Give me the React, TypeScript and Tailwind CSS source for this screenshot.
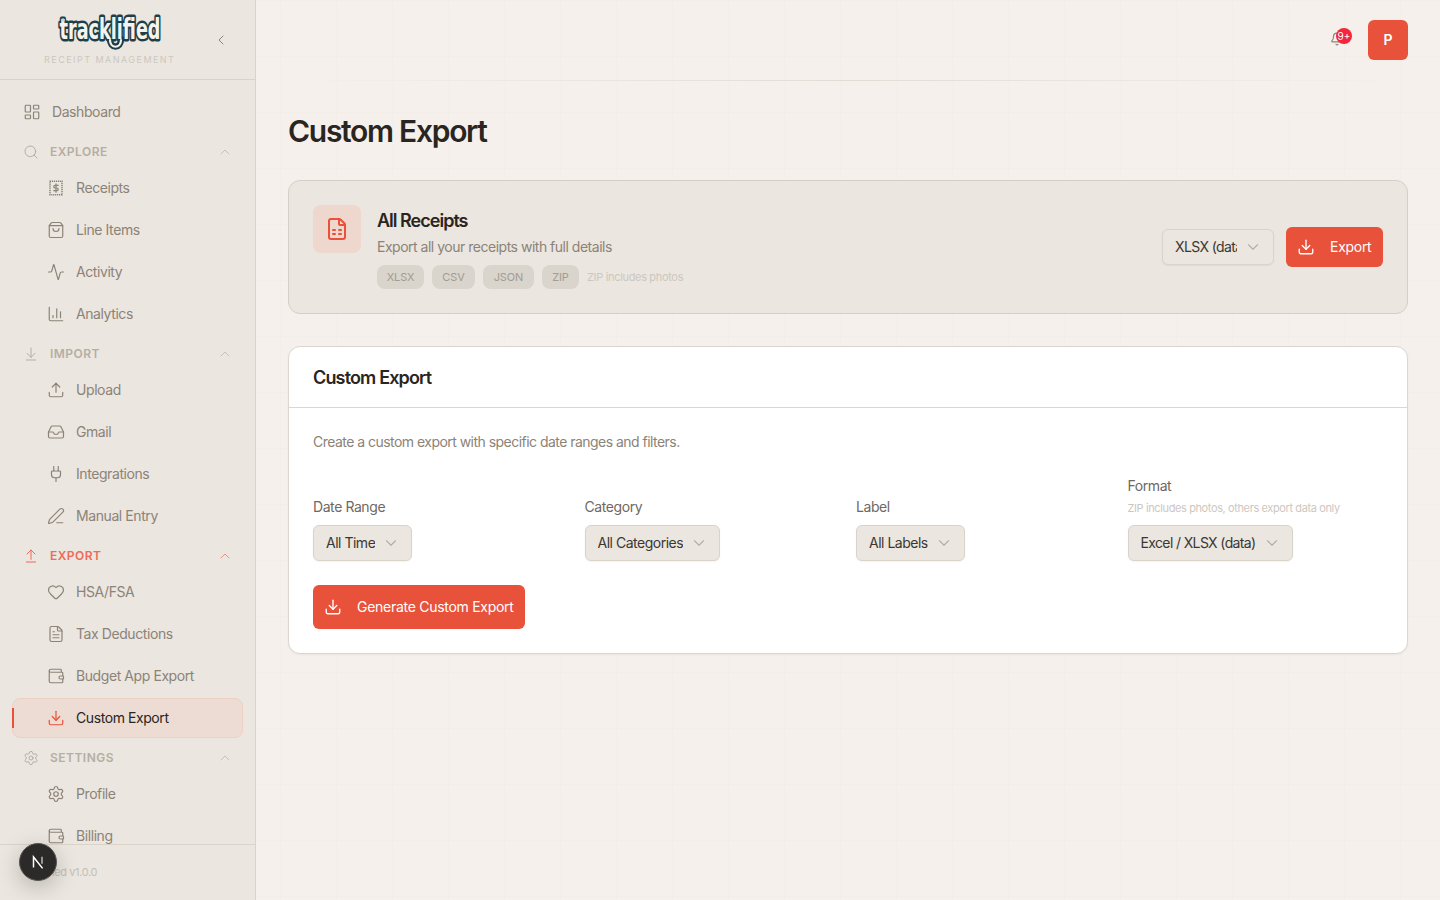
import React from "react";
import { LayoutDashboard, Search, ChevronUp, ChevronDown, ChevronLeft, ShoppingBag, Activity, ChartColumn, ArrowDownToLine, ArrowUpFromLine, Upload, Inbox, Plug, PenLine, Heart, FileText, Wallet, Download, Settings, FileSpreadsheet, Bell } from "lucide-react";

type IconProps = { className?: string; strokeWidth?: number };

function ReceiptIcon({ className }: IconProps) {
  return (
    <svg viewBox="0 0 24 24" fill="none" stroke="currentColor" className={className}>
      <rect x="4" y="3" width="16" height="18" strokeWidth={2} strokeDasharray="1.6 1" />
      <path d="M15 8.5h-4.2a1.7 1.7 0 0 0 0 3.5h2.4a1.7 1.7 0 0 1 0 3.5H9" strokeWidth={1.6} strokeLinecap="round" />
      <path d="M12 6.5v11" strokeWidth={1.6} strokeLinecap="round" />
    </svg>
  );
}

type Item = { label: string; icon: React.ComponentType<IconProps>; active?: boolean };

function Sub({ item }: { item: Item }) {
  const Icon = item.icon;
  return (
    <div className={item.active ? "relative flex h-10 items-center gap-[11px] rounded-lg border border-[#f0cfc3] bg-[#ecdcd3] pl-[34px] text-[#2a2520]" : "flex h-10 items-center gap-[11px] rounded-lg pl-[35px] text-[#8c8378]"}>
      {item.active && <span className="absolute -left-px top-[9px] h-5 w-0.5 bg-[#e9513a]" />}
      <Icon strokeWidth={1.6} className={item.active ? "size-[18px] shrink-0 text-[#e9513a]" : "size-[18px] shrink-0"} />
      <span className="text-sm tracking-[-0.03em]">{item.label}</span>
    </div>
  );
}

function Section({ label, icon: Icon, items, accent }: { label: string; icon: Item["icon"]; items: Item[]; accent?: boolean }) {
  return (
    <div className="flex flex-col gap-0.5">
      <div className={accent ? "-mb-0.5 flex h-8 items-center pl-[11px] pr-2.5 text-[#ee6b58]" : "-mb-0.5 flex h-8 items-center pl-[11px] pr-2.5 text-[#b5aea4]"}>
        <Icon strokeWidth={1.5} className="size-4 shrink-0" />
        <span className="ml-[11px] flex-1 text-xs font-semibold tracking-[0.04em]">{label}</span>
        <ChevronUp strokeWidth={1.5} className={accent ? "size-4 text-[#f0917f]" : "size-4 text-[#c7c1b8]"} />
      </div>
      {items.map((i) => (
        <Sub key={i.label} item={i} />
      ))}
    </div>
  );
}

function Select({ label, className, tight }: { label: string; className?: string; tight?: boolean }) {
  return (
    <div className={"flex h-9 items-center justify-between rounded-md border border-[#d9d3ca] bg-[#ebe6df] pl-3 pr-[11px] text-sm text-[#3c3732] shadow-[0_1px_2px_rgba(0,0,0,0.05)] " + (className ?? "")}>
      <span className={tight ? "overflow-hidden whitespace-nowrap tracking-[-0.045em]" : "overflow-hidden whitespace-nowrap tracking-[-0.035em]"}>{label}</span>
      <ChevronDown strokeWidth={1.5} className="ml-[7px] size-[18px] shrink-0 text-[#b5aea4]" />
    </div>
  );
}

function Field({ label, hint, select, tight }: { label: string; hint?: string; select: string; tight?: boolean }) {
  return (
    <div className="flex flex-col items-start">
      <div className="text-sm leading-5 tracking-[-0.03em] text-[#6f6860]">{label}</div>
      {hint && <div className="mb-[9px] mt-1 text-[11px] leading-4 tracking-[-0.035em] text-[#cdc7bf]">{hint}</div>}
      <Select label={select} tight={tight} className={hint ? "" : "mt-2"} />
    </div>
  );
}

const chips = [
  { label: "XLSX", w: "w-[47px]" },
  { label: "CSV", w: "w-[43px]" },
  { label: "JSON", w: "w-[51px]" },
  { label: "ZIP", w: "w-[37px]" },
];

export default function App() {
  return (
    <div className="flex h-[900px] w-[1440px] overflow-hidden bg-[#f5f0eb] bg-[linear-gradient(to_right,rgba(120,100,80,0.012)_1px,transparent_1px),linear-gradient(to_bottom,rgba(120,100,80,0.012)_1px,transparent_1px)] bg-[size:56px_56px] font-['Inter',sans-serif]">
      <aside className="relative flex w-64 shrink-0 flex-col border-r border-[#d9d3ca] bg-[#ebe6df]">
        <div className="flex h-20 shrink-0 items-center border-b border-[#d9d3ca] pl-11 pr-[26px]">
          <div className="flex flex-1 flex-col items-start">
            <svg width="130" height="46" viewBox="0 0 130 46" className="-mb-[3px] -ml-[3px] -mt-[3px]" aria-label="tracklified">
              <path d="M69 28c0 10 11 10 11 0" fill="none" stroke="#1e3f48" strokeWidth="6.5" strokeLinecap="round" />
              <text x="18.5" y="28" fontFamily="'DejaVu Sans', sans-serif" fontWeight="700" fontSize="29" textLength="101" lengthAdjust="spacingAndGlyphs" fill="#f5f3ee" stroke="#1e3f48" strokeWidth="5" strokeLinejoin="round" paintOrder="stroke">tracklified</text>
              <path d="M69 29c0 9 11 9 11 0" fill="none" stroke="#f5f3ee" strokeWidth="2.2" strokeLinecap="round" />
              <circle cx="22" cy="9" r="1.7" fill="#a9dfe6" />
            </svg>
            <div className="text-[9px] leading-3 tracking-[0.163em] text-[#cdc7bf]">RECEIPT MANAGEMENT</div>
          </div>
          <ChevronLeft strokeWidth={1.5} className="size-4 text-[#8c8378]" />
        </div>
        <nav className="flex min-h-0 flex-1 flex-col gap-1 overflow-hidden px-3 pt-3">
          <div className="flex h-10 shrink-0 items-center gap-[11px] pl-[11px] text-[#8c8378]">
            <LayoutDashboard strokeWidth={1.6} className="size-[18px] shrink-0" />
            <span className="text-sm tracking-[-0.03em]">Dashboard</span>
          </div>
          <Section label="EXPLORE" icon={Search} items={[
            { label: "Receipts", icon: ReceiptIcon },
            { label: "Line Items", icon: ShoppingBag },
            { label: "Activity", icon: Activity },
            { label: "Analytics", icon: ChartColumn },
          ]} />
          <Section label="IMPORT" icon={ArrowDownToLine} items={[
            { label: "Upload", icon: Upload },
            { label: "Gmail", icon: Inbox },
            { label: "Integrations", icon: Plug },
            { label: "Manual Entry", icon: PenLine },
          ]} />
          <Section label="EXPORT" accent icon={ArrowUpFromLine} items={[
            { label: "HSA/FSA", icon: Heart },
            { label: "Tax Deductions", icon: FileText },
            { label: "Budget App Export", icon: Wallet },
            { label: "Custom Export", icon: Download, active: true },
          ]} />
          <Section label="SETTINGS" icon={Settings} items={[
            { label: "Profile", icon: Settings },
            { label: "Billing", icon: Wallet },
          ]} />
        </nav>
        <div className="flex h-14 shrink-0 items-center border-t border-[#d9d3ca] pl-6">
          <div className="flex w-[73px] justify-end overflow-hidden">
            <span className="shrink-0 text-[11px] tracking-[-0.035em] text-[#c5bfb7]">Tracklified v1.0.0</span>
          </div>
        </div>
        <div className="absolute left-[19px] top-[843px] flex size-[38px] items-center justify-center rounded-full border border-[#555] bg-[#2b2a28] shadow-[0_6px_22px_rgba(0,0,0,0.22)]">
          <svg viewBox="0 0 16 16" className="size-4" fill="none">
            <path d="M3.5 13.5V3L12.6 14.4" stroke="#fff" strokeWidth="1.5" />
            <path d="M12 2.8v7" stroke="#bbb" strokeWidth="1.5" />
          </svg>
        </div>
      </aside>
      <main className="flex min-w-0 flex-1 flex-col px-8">
        <header className="flex h-20 shrink-0 items-center justify-end">
          <div className="relative mr-[22px] size-4 text-[#8c8378]">
            <Bell className="absolute left-0 top-0 size-3.5" />
            <span className="absolute -right-[6px] -top-[4px] flex size-4 items-center justify-center rounded-full bg-[#f3263c] text-[10px] text-white">9+</span>
          </div>
          <div className="flex size-10 items-center justify-center rounded-md bg-[#e9523a] text-sm font-semibold text-white">P</div>
        </header>
        <div className="h-px shrink-0 bg-gradient-to-r from-transparent via-[#e2dcd5] to-transparent" />
        <h1 className="mt-8 text-3xl leading-9 font-semibold tracking-[-0.043em] text-[#2a2520]">Custom Export</h1>
        <section className="mt-[31px] flex h-[134px] items-center justify-between rounded-xl border border-[#d5cfc7] bg-[#ebe6df] px-6">
          <div className="flex gap-4 self-start pt-6">
            <div className="flex size-12 items-center justify-center rounded-lg bg-[#eed7cd]">
              <FileSpreadsheet className="size-6 text-[#e9513a]" />
            </div>
            <div className="pt-0.5">
              <div className="text-lg leading-7 font-semibold tracking-[-0.055em] text-[#2a2520]">All Receipts</div>
              <div className="mt-0.5 text-sm leading-5 tracking-[-0.035em] text-[#8c8378]">Export all your receipts with full details</div>
              <div className="mt-2 flex items-center gap-2">
                {chips.map((c) => (
                  <span key={c.label} className={"flex h-6 items-center justify-center rounded-lg bg-[#d9d4cc] text-[11px] tracking-[-0.01em] text-[#a39c92] " + c.w}>{c.label}</span>
                ))}
                <span className="text-[11px] tracking-[-0.03em] text-[#cdc7bf]">ZIP includes photos</span>
              </div>
            </div>
          </div>
          <div className="flex items-center gap-3">
            <Select label="XLSX (data)" tight className="w-[112px] [&>span]:flex-1" />
            <button className="flex h-10 w-[97px] items-center gap-[15px] rounded-md bg-[#e9523a] pl-[11px] pr-3 text-sm text-white">
              <Download strokeWidth={1.8} className="size-[18px] shrink-0" />
              <span className="tracking-[-0.02em]">Export</span>
            </button>
          </div>
        </section>
        <section className="mt-8 rounded-xl border border-[#dcd6ce] bg-white shadow-[0_1px_2px_rgba(0,0,0,0.05)]">
          <div className="flex h-[61px] items-center border-b border-[#dcd6ce] px-6 pt-0.5 text-lg font-semibold tracking-[-0.047em] text-[#2a2520]">Custom Export</div>
          <div className="p-6">
            <p className="text-sm leading-5 tracking-[-0.038em] text-[#8c8378]">Create a custom export with specific date ranges and filters.</p>
            <div className="mt-6 grid grid-cols-4 items-end gap-4">
              <Field label="Date Range" select="All Time" />
              <Field label="Category" select="All Categories" />
              <Field label="Label" select="All Labels" />
              <Field label="Format" tight hint="ZIP includes photos, others export data only" select="Excel / XLSX (data)" />
            </div>
            <button className="mt-6 flex h-11 w-[212px] items-center gap-[15px] rounded-md bg-[#e9523a] pl-[11px] pr-3 text-sm text-white">
              <Download strokeWidth={1.8} className="size-[18px] shrink-0" />
              <span className="whitespace-nowrap tracking-[-0.02em]">Generate Custom Export</span>
            </button>
          </div>
        </section>
      </main>
    </div>
  );
}
